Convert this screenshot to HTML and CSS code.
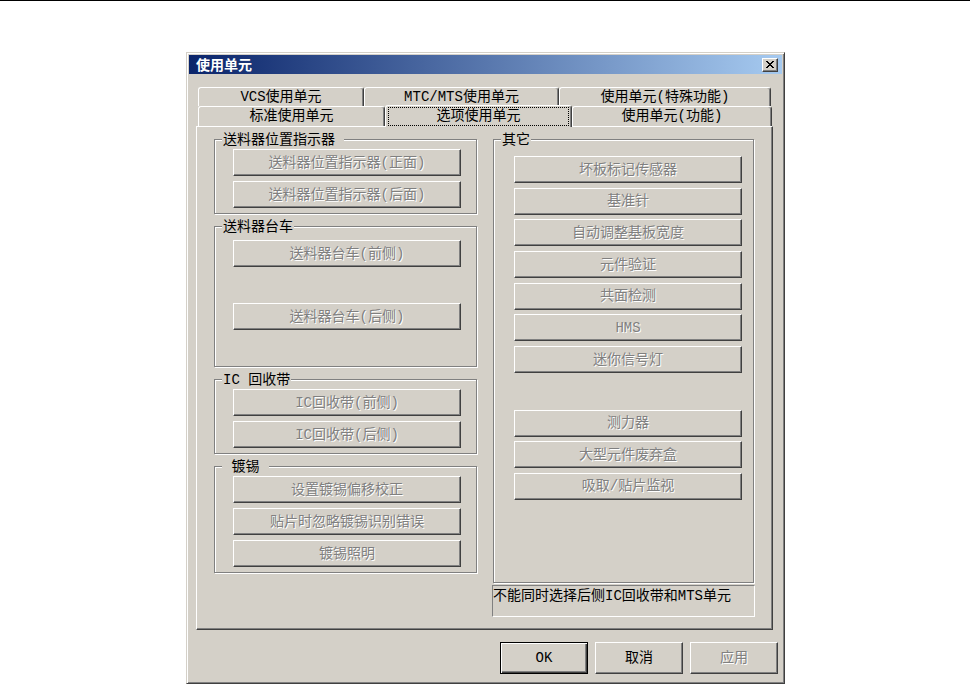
FILE: index.html
```html
<!DOCTYPE html>
<html lang="zh-CN">
<head>
    <meta charset="UTF-8">
    <meta name="viewport" content="width=device-width, initial-scale=1.0">
    <title>使用单元</title>
    <link rel="stylesheet" href="styles.css">
</head>
<body>
    <div class="dialog">
        <div class="titlebar">
            <span class="title">使用单元</span>
            <span class="close">
                <svg width="8" height="7" viewBox="0 0 8 7" shape-rendering="crispEdges">
                    <path fill="#000" d="M0 0h2v1H0zM6 0h2v1H6zM1 1h2v1H1zM5 1h2v1H5zM2 2h4v1H2zM3 3h2v1H3zM2 4h4v1H2zM1 5h2v1H1zM5 5h2v1H5zM0 6h2v1H0zM6 6h2v1H6z"/>
                </svg>
            </span>
        </div>

        <div class="tabs">
            <div class="tab-row back">
                <div class="tab tab-vcs">VCS使用单元</div>
                <div class="tab tab-mtc">MTC/MTS使用单元</div>
                <div class="tab tab-special">使用单元(特殊功能)</div>
            </div>
            <div class="tab-row front">
                <div class="tab tab-std">标准使用单元</div>
                <div class="tab tab-opt active"><span class="focus">选项使用单元</span></div>
                <div class="tab tab-func">使用单元(功能)</div>
            </div>
            <div class="panel">
                <div class="col-left">
                    <div class="group">
                        <div class="group-title">送料器位置指示器&nbsp;</div>
                        <div class="group-body">
                            <button class="btn" disabled>送料器位置指示器(正面)</button>
                            <button class="btn" disabled>送料器位置指示器(后面)</button>
                        </div>
                    </div>
                    <div class="group group-tall">
                        <div class="group-title">送料器台车</div>
                        <div class="group-body">
                            <button class="btn" disabled>送料器台车(前侧)</button>
                            <button class="btn" disabled>送料器台车(后侧)</button>
                        </div>
                    </div>
                    <div class="group">
                        <div class="group-title">IC 回收带</div>
                        <div class="group-body">
                            <button class="btn" disabled>IC回收带(前侧)</button>
                            <button class="btn" disabled>IC回收带(后侧)</button>
                        </div>
                    </div>
                    <div class="group">
                        <div class="group-title">&nbsp;镀锡&nbsp;</div>
                        <div class="group-body">
                            <button class="btn" disabled>设置镀锡偏移校正</button>
                            <button class="btn" disabled>贴片时忽略镀锡识别错误</button>
                            <button class="btn" disabled>镀锡照明</button>
                        </div>
                    </div>
                </div>

                <div class="col-right">
                    <div class="group group-other">
                        <div class="group-title">其它</div>
                        <div class="group-body">
                            <button class="btn" disabled>坏板标记传感器</button>
                            <button class="btn" disabled>基准针</button>
                            <button class="btn" disabled>自动调整基板宽度</button>
                            <button class="btn" disabled>元件验证</button>
                            <button class="btn" disabled>共面检测</button>
                            <button class="btn" disabled>HMS</button>
                            <button class="btn" disabled>迷你信号灯</button>
                            <div class="slot"></div>
                            <button class="btn" disabled>测力器</button>
                            <button class="btn" disabled>大型元件废弃盒</button>
                            <button class="btn" disabled>吸取/贴片监视</button>
                        </div>
                    </div>
                    <div class="note">不能同时选择后侧IC回收带和MTS单元</div>
                </div>
            </div>
        </div>

        <div class="footer">
            <button class="btn dlg-btn default">OK</button>
            <button class="btn dlg-btn">取消</button>
            <button class="btn dlg-btn" disabled>应用</button>
        </div>
    </div>
</body>
</html>
```

FILE: styles.css
```css
body {
    margin: 0;
    overflow: hidden;
    background-color: #fff;
    border-top: 1px solid #000;
    font: 14px/18px "Liberation Mono", "Noto Sans CJK SC", monospace;
    color: #000;
}
.dialog {
    box-sizing: border-box;
    width: 599px;
    height: 632px;
    margin: 51px 0 0 186px;
    padding: 2px;
    background: #d4d0c8;
    border: 1px solid;
    border-color: #d4d0c8 #404040 #404040 #d4d0c8;
    box-shadow: inset 1px 1px #fff, inset -1px -1px #808080;
    display: flex;
    flex-direction: column;
}
.titlebar {
    height: 19px;
    flex: none;
    display: flex;
    align-items: center;
    justify-content: space-between;
    padding: 0 4px 0 7px;
    background: linear-gradient(90deg, #0a246a, #a6caf0);
}
.title {
    color: #fff;
    font-weight: bold;
    font-family: "Noto Sans CJK SC", sans-serif;
    line-height: 19px;
}
.close {
    box-sizing: border-box;
    width: 16px;
    height: 14px;
    display: flex;
    align-items: center;
    justify-content: center;
    background: #d4d0c8;
    border: 1px solid;
    border-color: #fff #404040 #404040 #fff;
    box-shadow: inset -1px -1px #808080;
}

/* tabs */
.tabs {
    width: 577px;
    margin: 13px 0 0 7px;
    flex: none;
}
.tab-row {
    display: flex;
    padding-left: 2px;
    height: 19px;
}
.tab-row.front {
    height: 20px;
    align-items: flex-end;
}
.tab {
    box-sizing: border-box;
    height: 100%;
    background: #d4d0c8;
    border: 1px solid;
    border-bottom: 0;
    border-color: #fff #404040 #404040 #fff;
    box-shadow: inset -1px 0 #808080;
    border-radius: 3px 3px 0 0;
    text-align: center;
    line-height: 18px;
    white-space: nowrap;
}
.tab-vcs { width: 166px; }
.tab-mtc { width: 195px; }
.tab-special { width: 212px; }
.tab-std { width: 187px; }
.tab-opt { width: 187px; }
.tab-func { width: 200px; }
.tab.active {
    height: 22px;
    margin-bottom: -1px;
    position: relative;
    z-index: 1;
    padding: 1px 2px 0;
}
.focus {
    display: block;
    height: 17px;
    line-height: 16px;
    border: 1px dotted #000;
}
.panel {
    box-sizing: border-box;
    height: 504px;
    padding: 12px 0 0 17px;
    border: 1px solid;
    border-color: #fff #404040 #404040 #fff;
    box-shadow: inset -1px -1px #808080;
    display: grid;
    grid-template-columns: 263px 261px;
    column-gap: 16px;
    align-items: start;
}

/* group boxes */
.col-left {
    display: flex;
    flex-direction: column;
    gap: 12px;
}
.group {
    box-sizing: border-box;
    width: 263px;
    padding: 0 0 5px 7px;
    border: 1px solid #808080;
    box-shadow: inset 1px 1px #fff, 1px 1px #fff;
}
.group-title {
    display: table;
    margin-top: -8px;
    padding: 0 1px;
    line-height: 16px;
    background: #d4d0c8;
    white-space: nowrap;
}
.group-body {
    display: flex;
    flex-direction: column;
    gap: 5px;
    margin-top: 1px;
    padding-left: 11px;
}
.group-tall {
    padding-bottom: 36px;
}
.group-tall .group-body {
    margin-top: 5px;
    gap: 36px;
}
.group-other {
    width: 261px;
    height: 444px;
}
.group-other .group-body {
    margin-top: 8px;
    gap: 4.7px;
    padding-left: 13px;
}
.slot {
    height: 27px;
}
.note {
    box-sizing: border-box;
    width: 263px;
    height: 32px;
    margin: 2px 0 0 -1px;
    padding-top: 2px;
    line-height: 16px;
    border: 1px solid;
    border-color: #808080 #fff #fff #808080;
    white-space: nowrap;
}

/* buttons */
.btn {
    box-sizing: border-box;
    width: 228px;
    height: 27px;
    padding: 0;
    font: inherit;
    line-height: 24px;
    color: #000;
    background: #d4d0c8;
    border: 1px solid;
    border-color: #fff #404040 #404040 #fff;
    box-shadow: inset -1px -1px #808080;
    border-radius: 0;
    white-space: nowrap;
}
.btn:disabled {
    color: #808080;
    text-shadow: 1px 1px 0 #fff;
}
.footer {
    display: flex;
    justify-content: flex-end;
    gap: 7px;
    margin-top: 12px;
    padding-right: 4px;
}
.dlg-btn {
    width: 88px;
    height: 32px;
}
.dlg-btn.default {
    border-color: #000;
    box-shadow: inset 1px 1px #fff, inset -1px -1px #404040, inset -2px -2px #808080;
}
```
